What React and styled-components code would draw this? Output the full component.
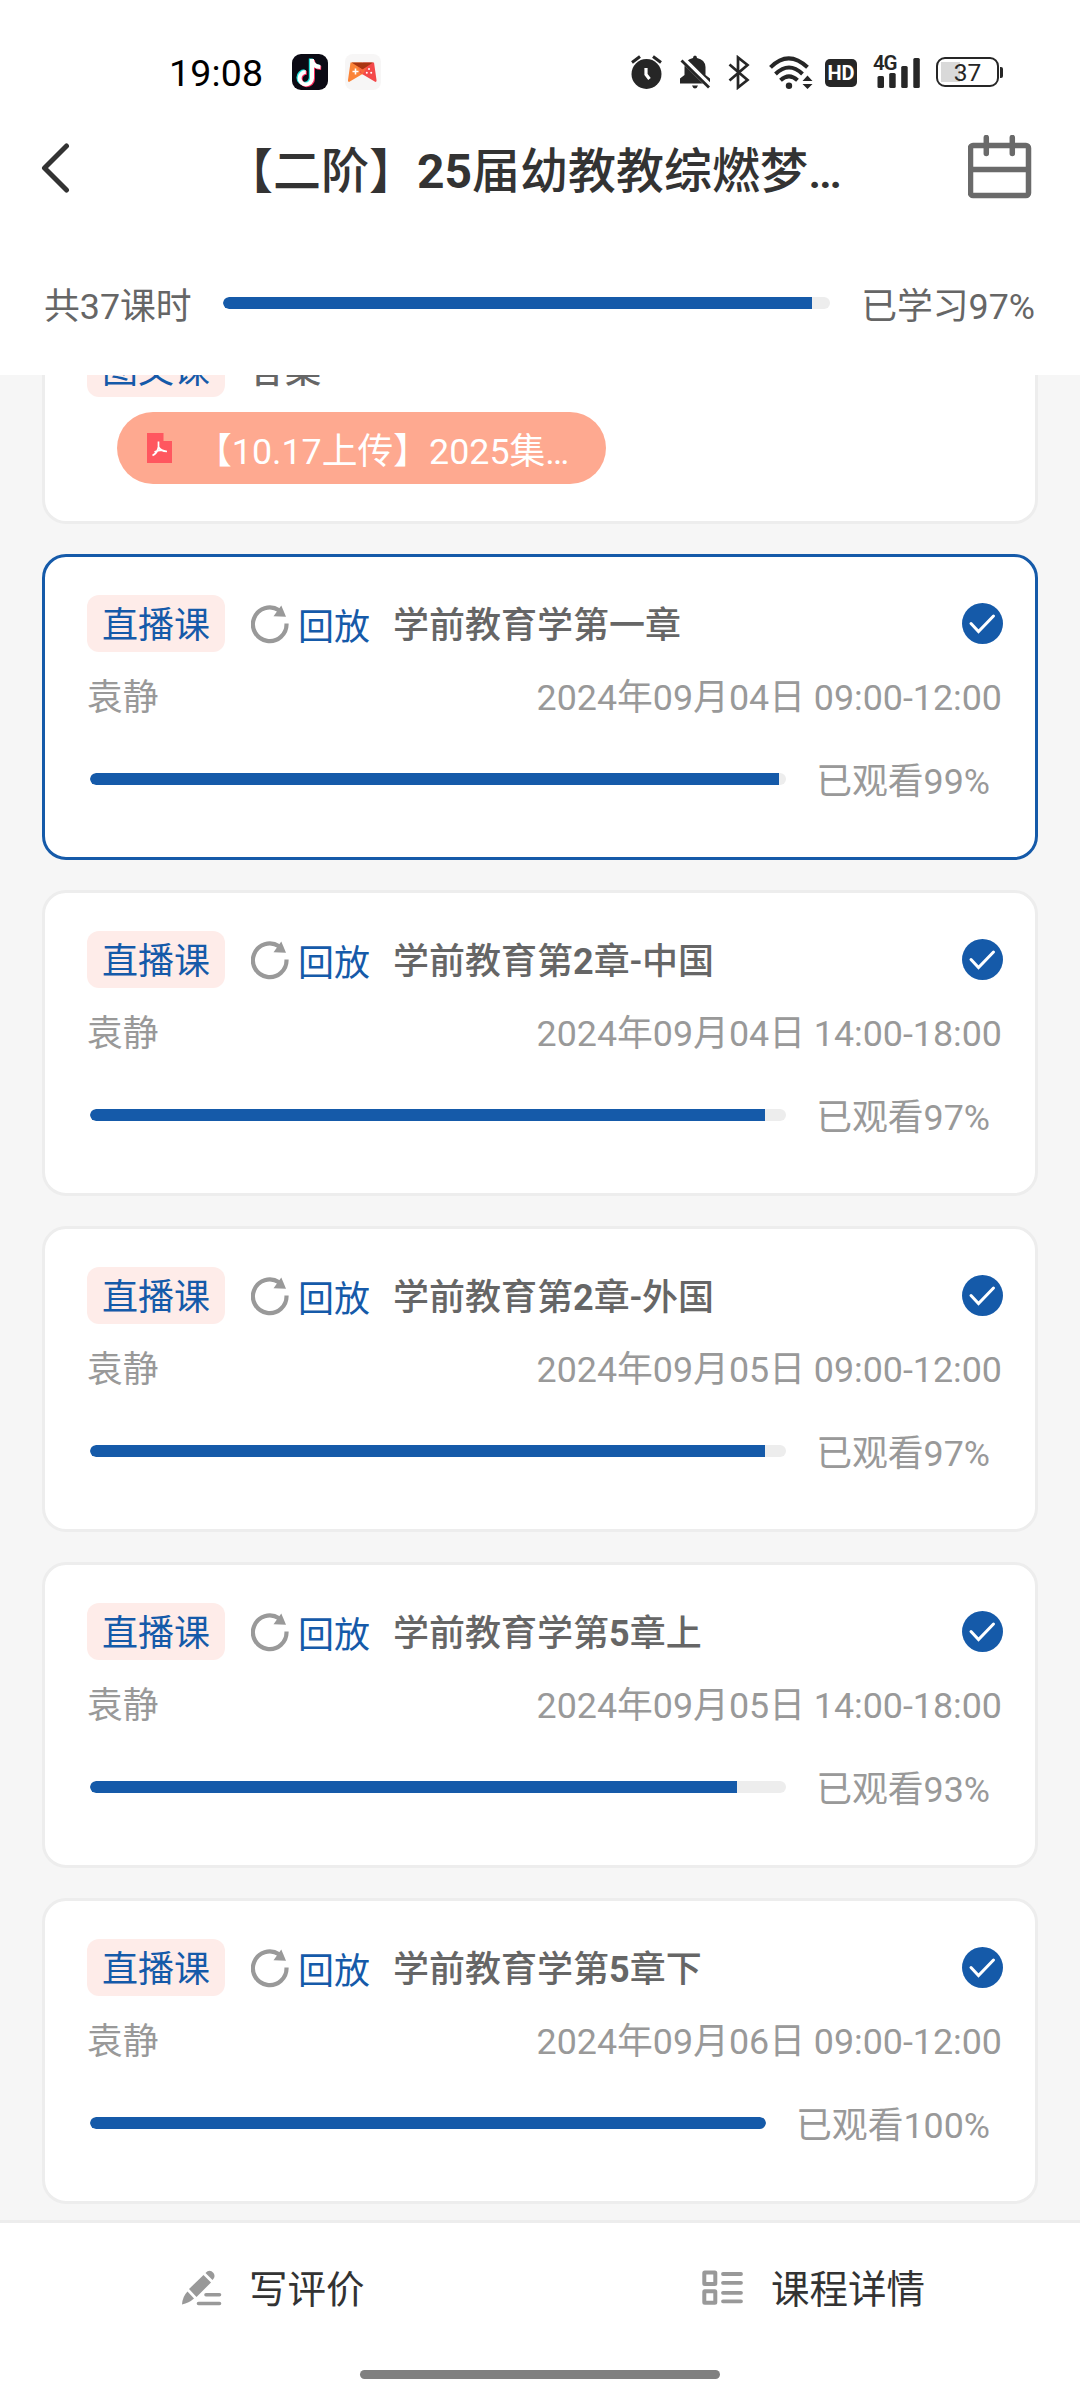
import React from "react";
import styled, { createGlobalStyle } from "styled-components";

const lessons = [
  { id: 1, title: "学前教育学第一章", date: "2024年09月04日 09:00-12:00", percent: 99, active: true },
  { id: 2, title: "学前教育第2章-中国", date: "2024年09月04日 14:00-18:00", percent: 97 },
  { id: 3, title: "学前教育第2章-外国", date: "2024年09月05日 09:00-12:00", percent: 97 },
  { id: 4, title: "学前教育学第5章上", date: "2024年09月05日 14:00-18:00", percent: 93 },
  { id: 5, title: "学前教育学第5章下", date: "2024年09月06日 09:00-12:00", percent: 100 },
];

// Numbers inside a heading are set bolder than the Chinese text
const boldDigits = (text) =>
  text.split(/(\d+)/).map((part, i) => (i % 2 ? <b key={i}>{part}</b> : part));

const TiktokIcon = () => (
  <svg width="36" height="36" viewBox="0 0 36 36">
    <rect width="36" height="36" rx="9" fill="#0b0a14" />
    <g fill="none" strokeWidth="4">
      <path d="M18.8 4.5v19a6.2 6.2 0 1 1-6.2-6.2M18.8 6c.8 4.2 4 6.4 8.4 6.6" stroke="#25e5df" />
      <path d="M21 6v19a6.2 6.2 0 1 1-6.2-6.2M21 7.5c.8 4 4 6.4 8.2 6.6" stroke="#fb2c5d" />
      <path d="M20 5v19.2a6.2 6.2 0 1 1-6.2-6.2M20 6.5c.8 4 4 6.4 8.4 6.6" stroke="#fff" />
    </g>
  </svg>
);

const GameIcon = () => (
  <svg width="36" height="36" viewBox="0 0 36 36">
    <rect width="36" height="36" rx="8" fill="#f7f6f6" />
    <path d="M5.5 8.5H17l3 10-16 9.5q-1.5-.3-1-2z" fill="#fb8438" />
    <path d="M29 8.5H17.5l-3 10 16 9.5q1.5-.3 1-2z" fill="#f4484a" />
    <path d="M6.5 8.5H28l-10.500 7z" fill="#a93612" />
    <path d="M12.5 12.500l5 3 5-2.500-5 7.500z" fill="#f9683d" />
    <path d="M10.5 14.500v6M7.500 17.500h6" stroke="#fff" strokeWidth="1.600" />
    <g fill="#fff">
      <circle cx="24" cy="15" r="1" />
      <circle cx="21.8" cy="18.8" r="1" />
      <circle cx="26.2" cy="18.8" r="1" />
    </g>
  </svg>
);

const AlarmIcon = () => (
  <svg width="32" height="35" viewBox="0 0 32 35">
    <circle cx="15.5" cy="19" r="15" fill="#262626" />
    <path d="M1 7.5l8-6M30 7.5l-8-6" stroke="#262626" strokeWidth="3" />
    <path d="M15 13v6.500l3.500 4.500" fill="none" stroke="#fff" strokeWidth="3.2" />
  </svg>
);

const MuteIcon = () => (
  <svg width="31" height="35" viewBox="0 0 31 35">
    <path
      d="M13 3q0-2.500 2-2.500T17 3q8 1.500 8.500 9v8l4.500 3.500v5H0v-5L4.500 20v-8Q5 4.500 13 3zM12 30.500h6q-1 3-3 3t-3-3z"
      fill="#262626"
    />
    <path d="M1 2.5l30 30" stroke="#fff" strokeWidth="6" />
    <path d="M1.5 5.5l27.500 27" stroke="#262626" strokeWidth="2.8" />
  </svg>
);

const BluetoothIcon = () => (
  <svg width="24" height="35" viewBox="0 0 24 35">
    <path d="M1.5 9.5l18 15.500-9.500 7.500V2.500L19.500 10l-18 15.500" fill="none" stroke="#262626" strokeWidth="2.7" />
  </svg>
);

const WifiIcon = () => (
  <svg width="45" height="35" viewBox="0 0 45 35">
    <g fill="none" stroke="#262626" strokeWidth="4">
      <path d="M1.5 12.3q18-18 37 0" />
      <path d="M6.5 19q13.500-13 27 0" />
      <path d="M11.5 25.3q8.500-8 17 0" />
    </g>
    <circle cx="20" cy="30.8" r="3.2" fill="#262626" />
    <path d="M33.5 26l5-5.500 5 5.500zM33.500 29l5 5 5-5z" fill="#262626" />
  </svg>
);

const SignalIcon = () => (
  <svg width="48" height="35" viewBox="0 0 48 35">
    <g fill="#262626">
      <rect x="3.5" y="21" width="6.5" height="12" rx="1.5" />
      <rect x="15.2" y="18" width="6.5" height="15" rx="1.5" />
      <rect x="27.2" y="11" width="6.5" height="22" rx="1.5" />
      <rect x="39.3" y="3" width="6.5" height="30" rx="1.5" />
    </g>
  </svg>
);

const BackIcon = () => (
  <svg width="30" height="50" viewBox="0 0 30 50">
    <path d="M26.5 3L4.500 25l22 22" fill="none" stroke="#333" strokeWidth="5" strokeLinecap="round" strokeLinejoin="round" />
  </svg>
);

const CalendarIcon = () => (
  <svg width="64" height="66" viewBox="0 0 64 66">
    <g fill="none" stroke="#6a6a6a" strokeWidth="5.5">
      <rect x="2.5" y="10.5" width="58" height="50" rx="2.5" />
      <path d="M2.5 34.5H61" />
      <path d="M18.3 2.5v16M44.3 2.5v16" strokeLinecap="round" />
    </g>
  </svg>
);

const PdfIcon = () => (
  <svg width="25" height="30" viewBox="0 0 25 30">
    <path d="M0 0h16.500v8H25v22H0z" fill="#ff575f" />
    <path
      d="M11.5 8.5v5.500q-1 6-6 8.500M11.500 14q2 4 8.500 4.500M7.500 19q4-2 8-1.800"
      fill="none"
      stroke="#fff"
      strokeWidth="1.7"
    />
  </svg>
);

const ReplayIcon = () => (
  <svg width="38" height="42" viewBox="0 0 38 42">
    <path d="M35.5 20.500A16.800 16.800 0 1 1 28 7.300" fill="none" stroke="#999" strokeWidth="4.2" />
    <path d="M30.300 2.500l4.700 11.300-12.500-.5z" fill="#999" />
  </svg>
);

const CheckIcon = () => (
  <svg width="41" height="41" viewBox="0 0 41 41">
    <circle cx="20.5" cy="20.5" r="20.5" fill="#155aa9" />
    <path d="M9 20.5l7.500 8L31.500 13" fill="none" stroke="#fff" strokeWidth="3" strokeLinecap="round" />
  </svg>
);

const PenIcon = () => (
  <svg width="40" height="36" viewBox="0 0 40 36">
    <g fill="#999">
      <path d="M23.5 3q4-4.500 8 0 2.500 3.500-1 7z" />
      <path d="M21.5 5l7.500 7.500L14.500 27l-7.500-8z" />
      <path d="M5.5 21.5l6.500 7q-5 4.500-12 6 .5-8 5.500-13z" />
    </g>
    <path d="M24 24.8h13.500M16.500 33.500h21" stroke="#999" strokeWidth="3.6" strokeLinecap="round" />
  </svg>
);

const ListIcon = () => (
  <svg width="42" height="36" viewBox="0 0 42 36">
    <g fill="none" stroke="#999" strokeWidth="4">
      <rect x="2.3" y="2.5" width="11" height="11.5" rx="0.5" />
      <rect x="2.3" y="21.3" width="11" height="11.5" rx="0.5" />
      <path d="M21 4h18M21 12.8h18M21 22.8h18M21 31.3h18" strokeLinecap="round" strokeWidth="3.8" />
    </g>
  </svg>
);

const App = () => {
  return (
    <Screen>
      <GlobalStyle />
      <StatusBar>
        <Clock>19:08</Clock>
        <AppIcons>
          <TiktokIcon />
          <GameIcon />
        </AppIcons>
        <SystemIcons>
          <AlarmIcon />
          <MuteIcon />
          <BluetoothIcon />
          <WifiIcon />
          <HdBadge>HD</HdBadge>
          <Signal>
            <SignalIcon />
            <NetworkLabel>4G</NetworkLabel>
          </Signal>
          <Battery>
            <BatteryBody>37</BatteryBody>
            <BatteryTip />
          </Battery>
        </SystemIcons>
      </StatusBar>

      <TitleBar>
        <BackIcon />
        <PageTitle>{boldDigits("【二阶】25届幼教教综燃梦…")}</PageTitle>
        <CalendarIcon />
      </TitleBar>

      <Summary>
        <span>共37课时</span>
        <Track>
          <Fill style={{ width: "97%" }} />
        </Track>
        <span>已学习97%</span>
      </Summary>

      <LessonList>
        <ArticleCard>
          <ArticleHead>
            <Badge>图文课</Badge>
            <LessonTitle>答案</LessonTitle>
          </ArticleHead>
          <FilePill>
            <PdfIcon />
            <span>【10.17上传】2025集…</span>
          </FilePill>
        </ArticleCard>

        {lessons.map((lesson) => (
          <Card key={lesson.id} $active={lesson.active}>
            <CardHead>
              <Badge>直播课</Badge>
              <Replay>
                <ReplayIcon />
                回放
              </Replay>
              <LessonTitle>{boldDigits(lesson.title)}</LessonTitle>
              <CheckIcon />
            </CardHead>
            <Meta>
              <span>袁静</span>
              <span>{lesson.date}</span>
            </Meta>
            <Watched>
              <Track>
                <Fill $full={lesson.percent === 100} style={{ width: `${lesson.percent}%` }} />
              </Track>
              <span>已观看{lesson.percent}%</span>
            </Watched>
          </Card>
        ))}
      </LessonList>

      <BottomBar>
        <Action $left={182}>
          <PenIcon />
          <span>写评价</span>
        </Action>
        <Action $left={162}>
          <ListIcon />
          <span>课程详情</span>
        </Action>
      </BottomBar>
      <HomeArea>
        <HomeIndicator />
      </HomeArea>
    </Screen>
  );
};

const GlobalStyle = createGlobalStyle`
  * {
    box-sizing: border-box;
  }
  body {
    margin: 0;
    font-family: Roboto, "Noto Sans CJK SC", sans-serif;
  }
  svg {
    display: block;
    flex-shrink: 0;
  }
  b {
    font-weight: 700;
  }
`;

const Screen = styled.div`
  display: flex;
  flex-direction: column;
  width: 1080px;
  height: 2400px;
  overflow: hidden;
  background: #fff;
  white-space: nowrap;
`;

const StatusBar = styled.header`
  display: flex;
  flex-shrink: 0;
  align-items: center;
  height: 144px;
  padding: 0 77px 0 169px;
`;

const Clock = styled.span`
  width: 123px;
  padding-top: 2px;
  font-size: 37.5px;
  line-height: 44px;
  letter-spacing: 0.2px;
  color: #000;
`;

const AppIcons = styled.div`
  display: flex;
  gap: 17px;
`;

const SystemIcons = styled.div`
  display: flex;
  align-items: center;
  gap: 17px;
  margin-left: auto;
`;

const HdBadge = styled.span`
  width: 32px;
  height: 28px;
  margin: 2px 0 0 -6px;
  border-radius: 5px;
  background: #262626;
  color: #fff;
  font-size: 20px;
  font-weight: 700;
  line-height: 29px;
  text-align: center;
`;

const Signal = styled.div`
  position: relative;
`;

const NetworkLabel = styled.span`
  position: absolute;
  top: -4px;
  left: -1px;
  font-size: 20.5px;
  font-weight: 600;
  line-height: 24px;
  letter-spacing: -1.2px;
  color: #262626;
`;

const Battery = styled.div`
  display: flex;
  align-items: center;
  gap: 1px;
  margin-left: -3px;
`;

const BatteryBody = styled.span`
  width: 63px;
  height: 30px;
  border: 2px solid #262626;
  border-radius: 9px;
  background: linear-gradient(#d9d9d9, #d9d9d9) 3px 3px / 19px 20px no-repeat;
  color: #262626;
  font-size: 24.5px;
  line-height: 28px;
  text-align: center;
`;

const BatteryTip = styled.span`
  width: 3px;
  height: 11px;
  border-radius: 0 2px 2px 0;
  background: #262626;
`;

const TitleBar = styled.div`
  display: flex;
  flex-shrink: 0;
  align-items: center;
  height: 48px;
  padding: 0 48px 0 40px;
`;

const PageTitle = styled.h1`
  flex: 1;
  margin: 0 0 0 155px;
  padding-top: 7px;
  font-size: 48px;
  font-weight: 500;
  line-height: 56px;
  color: #333;
`;

const Summary = styled.section`
  display: flex;
  flex-shrink: 0;
  align-items: center;
  gap: 31px;
  height: 183px;
  padding: 38px 45px 0 44px;
  font-size: 35.8px;
  color: #666;
`;

const Track = styled.div`
  flex: 1;
  height: 12px;
  border-radius: 6px;
  background: #ededed;
  overflow: hidden;
`;

const Fill = styled.div`
  height: 100%;
  border-radius: ${({ $full }) => ($full ? "6px" : "6px 0 0 6px")};
  background: #155aa9;
`;

const LessonList = styled.main`
  display: flex;
  flex: 1;
  flex-direction: column;
  gap: 30px;
  min-height: 0;
  padding: 0 42px;
  background: #f6f6f6;
  overflow: hidden;
`;

const Card = styled.article`
  flex-shrink: 0;
  height: 306px;
  padding: 38px 32px 0 42px;
  border: 3px solid ${({ $active }) => ($active ? "#155aa9" : "#ededed")};
  border-radius: 24px;
  background: #fff;
`;

// Scrolled partly under the header, so its contents hang from the bottom edge
const ArticleCard = styled(Card)`
  display: flex;
  flex-direction: column;
  justify-content: flex-end;
  align-items: flex-start;
  height: 149px;
  padding: 0 42px 37px;
  border-top: 0;
  border-radius: 0 0 24px 24px;
`;

const CardHead = styled.div`
  display: flex;
  flex-shrink: 0;
  align-items: center;
  height: 57px;

  > svg {
    margin-left: auto;
  }
`;

const ArticleHead = styled(CardHead)`
  gap: 24px;
  margin-bottom: 15px;
`;

const Badge = styled.span`
  height: 57px;
  padding: 3px 15px 0;
  border-radius: 12px;
  background: #feece9;
  color: #155aa9;
  font-size: 36px;
  line-height: 57px;
`;

const Replay = styled.span`
  display: flex;
  align-items: center;
  gap: 9px;
  margin: 0 23px 0 26px;
  color: #155aa9;
  font-size: 36px;
`;

const LessonTitle = styled.h2`
  margin: 0;
  padding-top: 6px;
  font-size: 36px;
  font-weight: 500;
  line-height: 57px;
  color: #666;
`;

const Meta = styled.div`
  display: flex;
  justify-content: space-between;
  margin-top: 19px;
  padding-right: 1px;
  color: #999;
  font-size: 35.8px;
  line-height: 54px;
`;

const Watched = styled.div`
  display: flex;
  align-items: center;
  gap: 30px;
  margin-top: 30px;
  padding: 0 13px 0 3px;
  color: #999;
  font-size: 35.8px;
  line-height: 54px;

  ${Track} {
    margin-top: -6px;
  }
`;

const FilePill = styled.div`
  display: flex;
  flex-shrink: 0;
  align-items: center;
  gap: 24px;
  width: 489px;
  height: 72px;
  margin-left: 30px;
  padding: 0 30px;
  border-radius: 36px;
  background: #fea990;
  color: #fff;
  font-size: 35.8px;
`;

const BottomBar = styled.nav`
  display: flex;
  flex-shrink: 0;
  height: 136px;
  border-top: 3px solid #ededed;
`;

const Action = styled.div`
  display: flex;
  align-items: center;
  gap: 27px;
  width: 540px;
  padding: 0 0 4px ${({ $left }) => $left}px;
  color: #333;
  font-size: 38.5px;

  span {
    padding-bottom: 3px;
  }
`;

const HomeArea = styled.div`
  display: flex;
  flex-shrink: 0;
  justify-content: center;
  height: 44px;
  padding-top: 14px;
`;

const HomeIndicator = styled.div`
  width: 360px;
  height: 9px;
  border-radius: 5px;
  background: #808080;
`;

export default App;
